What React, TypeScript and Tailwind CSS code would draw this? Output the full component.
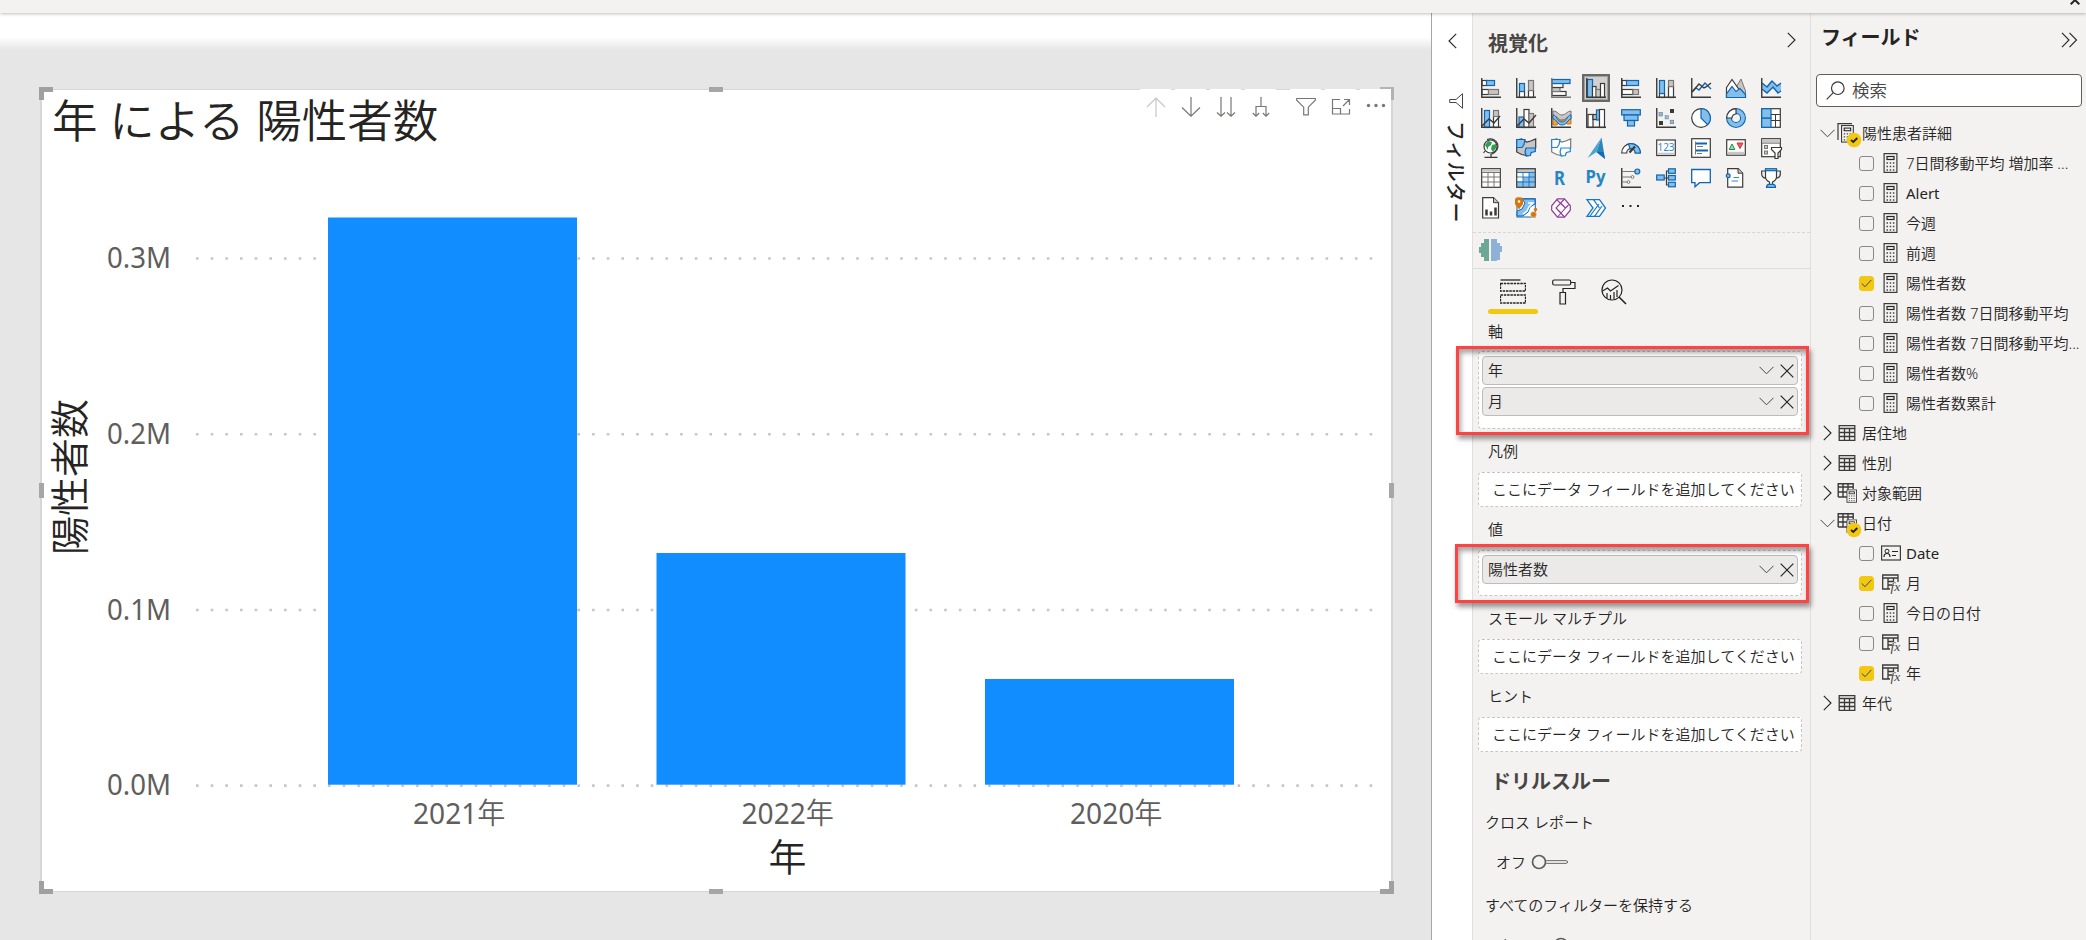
import React from 'react';
import clsx from 'clsx';

const DARK = '#3b3a38';
const MID = '#797775';
const GRAY = '#c8c6c4';
const BLUE = '#0f66b0';
const SKY = '#83beec';

const Axis = ({ c = DARK }: { c?: string }) => <path d="M.75 0V19.25H20" stroke={c} strokeWidth="1.4" fill="none" />;

const Box = ({ x, y, w, h, f = '#fff', s = DARK }: { x: number; y: number; w: number; h: number; f?: string; s?: string }) => (
  <rect x={x} y={y} width={w} height={h} fill={f} stroke={s} strokeWidth="1.2" />
);

// 20x20 drawings of the visual gallery, row by row
const visuals: React.ReactNode[] = [
  <><Box x={1} y={2.5} w={5} h={5} /><Box x={5.5} y={2.5} w={8} h={5} f={SKY} s={BLUE} /><Box x={1} y={11.5} w={6.5} h={5} /><Box x={7.5} y={11.5} w={10} h={5} f={GRAY} s={MID} /><Axis /></>,
  <><Box x={3.5} y={13.5} w={5} h={6} /><Box x={3.5} y={5.5} w={5} h={8} f={SKY} s={BLUE} /><Box x={12.5} y={12.5} w={5} h={7} /><Box x={12.5} y={2.5} w={5} h={10} f={GRAY} s={MID} /><Axis /></>,
  <><Box x={1} y={13.5} w={14} h={4} /><Box x={1} y={9.5} w={8} h={4} f={GRAY} s={MID} /><Box x={1} y={5.5} w={11} h={4} /><Box x={1} y={1.5} w={18} h={4} f={SKY} s={BLUE} /><Axis c={MID} /></>,
  <><Box x={1.5} y={1.5} w={5} h={18} f={SKY} s={BLUE} /><Box x={6.5} y={8.5} w={3.5} h={11} /><Box x={10} y={11.5} w={4.5} h={8} f={GRAY} s={MID} /><Box x={14.5} y={5.5} w={4} h={14} /><Axis /></>,
  <><Box x={1} y={2.5} w={5} h={5} /><Box x={5.5} y={2.5} w={12} h={5} f={SKY} s={BLUE} /><Box x={1} y={11.5} w={11} h={5} /><Box x={12} y={11.5} w={5.5} h={5} f={GRAY} s={MID} /><Axis /></>,
  <><Box x={3.5} y={15.5} w={5} h={4} /><Box x={3.5} y={2.5} w={5} h={13} f={SKY} s={BLUE} /><Box x={12.5} y={8.5} w={5} h={11} /><Box x={12.5} y={2.5} w={5} h={6} f={GRAY} s={MID} /><Axis /></>,
  <><path d="M1 14l4-4 3 2 6-7 6 6" stroke={BLUE} strokeWidth="1.4" fill="none" /><path d="M1 14l7-8 5 4 2-1 5-4" stroke={DARK} strokeWidth="1.4" fill="none" /><Axis /></>,
  <><path d="M9 11l6-10 4.5 12v6.5H9z" fill={GRAY} stroke={MID} /><path d="M.5 9.5L6 1.5l7 10-6 8H.5z" fill="#fff" stroke={DARK} strokeWidth="1.2" /><path d="M.5 19.5V16L6 8.5l4 5 4-3 5.5 6v3z" fill={SKY} stroke={BLUE} strokeWidth="1.2" /></>,
  <><path d="M1 5l4 4 5-6 5 5 5-3v8l-3 2-6-6-5 6-5-5z" fill={SKY} /><path d="M1 5l5 4 5-6 5 5 4-3M1 11l5 4 6-6 5 6 3-2" fill="none" stroke={BLUE} strokeWidth="1.4" /><Axis /></>,

  <><Box x={3.5} y={2.5} w={5} h={17} f={SKY} s={BLUE} /><Box x={12.5} y={8} w={5} h={11.5} /><Box x={12.5} y={2.5} w={5} h={6} f={GRAY} s={MID} /><path d="M1 18l7-7 5 4 6-7" fill="none" stroke={DARK} strokeWidth="1.4" /><Axis /></>,
  <><Box x={3} y={9} w={5.5} h={10.5} f={SKY} s={BLUE} /><Box x={8} y={1.5} w={5} h={18} /><Box x={13} y={5.5} w={4.5} h={14} f={GRAY} s={MID} /><path d="M1 18l7-7 5 4 7-8" fill="none" stroke={DARK} strokeWidth="1.4" /><Axis /></>,
  <><path d="M2 8h4l3 4h3l3-4h5v8h-4l-3-3h-4l-3 4H2z" fill="#f0a13c" stroke="#d9730d" /><path d="M2 3c5 0 5 4 9 4s5-4 9-4v5c-4 0-5 4-9 4S7 8 2 8z" fill={GRAY} stroke={MID} /><path d="M2 7c4 0 4 7 9 7s5-7 9-7v4c-3 0-4 6-9 6s-5-6-9-6z" fill={SKY} stroke={BLUE} /><Axis /></>,
  <><Box x={2} y={6.5} w={5} h={13} /><Box x={7} y={6.5} w={3.5} h={5} f={GRAY} /><Box x={10.5} y={2} w={3} h={10} f={SKY} s={BLUE} /><Box x={13.5} y={1.5} w={5} h={18} /><Axis /></>,
  <><Box x={.7} y={1.7} w={18.6} h={5.3} f={SKY} s={BLUE} /><Box x={3} y={7} w={14} h={5.5} f={SKY} s={BLUE} /><Box x={6.5} y={12.5} w={7} h={5.5} f={SKY} s={BLUE} /></>,
  <><rect x="3" y="4.5" width="3.5" height="3.5" fill={SKY} stroke={MID} strokeWidth=".6" /><rect x="9" y="7.5" width="3.5" height="3.5" fill={SKY} stroke={MID} strokeWidth=".4" /><rect x="14" y="1" width="4" height="4" fill={DARK} /><rect x="3" y="13" width="4" height="4" fill={DARK} /><rect x="14.2" y="12.2" width="3.5" height="3.5" fill={SKY} stroke={MID} strokeWidth=".6" /><Axis /></>,
  <><circle cx="10" cy="10" r="9.3" fill="#fff" stroke={DARK} strokeWidth="1.2" /><path d="M10 .7A9.3 9.3 0 0116.6 16.6L10 10z" fill={SKY} stroke={BLUE} strokeWidth="1.2" /></>,
  <><circle cx="10" cy="10" r="7" fill="none" stroke={BLUE} strokeWidth="6" /><circle cx="10" cy="10" r="7" fill="none" stroke={SKY} strokeWidth="3.8" /><path d="M.7 10A9.3 9.3 0 0110 .7V6a4 4 0 00-4 4z" fill="#fff" stroke={DARK} strokeWidth="1.2" /></>,
  <><Box x={.7} y={.7} w={18.6} h={18.6} /><Box x={.7} y={.7} w={9.3} h={9.5} f={SKY} s={BLUE} /><Box x={.7} y={10.2} w={9.3} h={9.1} f={SKY} s={BLUE} /><path d="M10 6.5h9M10 12.5h9M14.5 6.5V19" stroke={DARK} fill="none" /></>,

  <><path d="M6 1.5C17-2 22 12 10 16.5M10 16v3M3.5 19.3h13M4 13l-1.5 2" stroke={DARK} strokeWidth="1.2" fill="none" /><circle cx="9.5" cy="8.5" r="6.5" fill="#fff" stroke={DARK} strokeWidth="1.2" /><path d="M4 7l3-4 4 1-1 3-3 2v3zM11 7l4-1v4l-3 4-2-3z" fill="#2e9e4f" /></>,
  <><path d="M.7 2l5-1 5 3 4-1 5-2v9l-4 4-5 3.5-5-1L.7 14z" fill={GRAY} stroke={DARK} strokeWidth="1.2" /><path d="M.7 1.5H9l-1 5-2 3H.7zM9 14l1-4h9.3v3.5l-4 1-1 3-4 .5z" fill={SKY} stroke={BLUE} strokeWidth="1.2" /></>,
  <><path d="M.7 2l5-1 5 3 4-1 5-2v9l-4 4-5 3.5-5-1L.7 14z" fill="#fff" stroke={MID} strokeWidth="1.2" /><path d="M.7 1.5H9l-1 5-2 3H.7zM9 14l1-4h9.3v3.5l-4 1-1 3-4 .5z" fill="#fff" stroke="#1b84d3" strokeWidth="1.2" /></>,
  <><path d="M15.5-.5L1.5 20l9-6z" fill="#4aa5cf" /><path d="M15.5-.5L10.5 14l8.5 7z" fill="#2b86b8" /><path d="M10.5 14l8.5 7-1.5-7z" fill="#0f6cbd" /></>,
  <><path d="M.7 15A9.3 9.3 0 0119.3 15h-5a4.3 4.3 0 00-8.6 0z" fill="#fff" stroke={DARK} strokeWidth="1.2" /><path d="M7.5 6A9.3 9.3 0 0119.3 15h-5a4.3 4.3 0 00-5.3-4.2z" fill={SKY} stroke={BLUE} strokeWidth="1.2" /><path d="M8.5 14.5L14 8.5" stroke={DARK} strokeWidth="2.2" /></>,
  <><Box x={.7} y={2} w={18.6} h={15.5} /><path d="M1.5 15.7h17" stroke={GRAY} strokeWidth="2" /><text x="10" y="13" fontSize="10" textAnchor="middle" fill="#2b88d8" className="font-normal">123</text></>,
  <><Box x={.7} y={.7} w={18.6} h={18.6} /><path d="M4.5 3.5v13M6 8.5h6M6 15.5h5" stroke={MID} /><path d="M5 5.5h11M5 12.5h12" stroke={BLUE} strokeWidth="1.8" /></>,
  <><Box x={.7} y={1.7} w={18.6} h={15.5} /><path d="M1.5 15h17" stroke={GRAY} strokeWidth="2.5" /><path d="M3.2 11.5L6 6l2.8 5.5z" fill="#a7d9b0" stroke="#1e8e3e" /><path d="M11 5h6l-3 5.5z" fill="#f15b5b" stroke="#d13438" /></>,
  <><Box x={.7} y={.7} w={18.6} h={18} /><path d="M1 3h18" stroke={GRAY} strokeWidth="3.5" /><path d="M1 5.2h18" stroke={MID} /><rect x="3.5" y="7.5" width="3" height="3" fill={GRAY} stroke={MID} /><rect x="3.5" y="13" width="3" height="3" fill={GRAY} stroke={MID} /><path d="M10.5 9.5h10v2L17 15v5.5h-3V15l-3.5-3.5z" fill="#fff" stroke={DARK} strokeWidth="1.2" /></>,

  <><Box x={.7} y={.7} w={18.6} h={18.6} /><path d="M1.3 2.5h17.4" stroke={GRAY} strokeWidth="2.5" /><path d="M1 4.5h18M1 9h18M1 14h18M7 4.5v15M13 4.5v15" stroke={MID} fill="none" /></>,
  <><rect x="1" y="1" width="18" height="18" fill={SKY} /><path d="M1 2.5h18" stroke={GRAY} strokeWidth="2.5" /><path d="M1 5h6v8H1zM7 5h6v4H7z" fill="#fff" /><path d="M1 4.5h18M1 9h18M1 14h18M7 4.5v15M13 4.5v15" stroke={BLUE} strokeWidth=".8" fill="none" /><Box x={.7} y={.7} w={18.6} h={18.6} f="none" /></>,
  <text x="8.5" y="16.5" fontSize="19" fontWeight="700" textAnchor="middle" fill="#2786c2" textLength="11" lengthAdjust="spacingAndGlyphs">R</text>,
  <text x="9.5" y="14.5" fontSize="18" fontWeight="700" textAnchor="middle" fill="#2786c2" textLength="20" lengthAdjust="spacingAndGlyphs">Py</text>,
  <><Axis /><path d="M1 3.5h13M1 9h9M1 14h5" stroke={MID} strokeWidth="1.2" /><circle cx="16.3" cy="3.5" r="2.5" fill={SKY} stroke={BLUE} strokeWidth="1.2" /><circle cx="11.5" cy="9" r="1.4" fill="#fff" stroke={MID} /><circle cx="7.5" cy="14" r="1.4" fill="#fff" stroke={MID} /></>,
  <><path d="M8 10h5M13 3h-2.5v14H13" stroke={DARK} strokeWidth="1.2" fill="none" /><Box x={.7} y={7} w={7.5} h={5} f={SKY} s={BLUE} /><Box x={12.5} y={.8} w={6.8} h={4.5} f={SKY} s={BLUE} /><Box x={12.5} y={7.5} w={6.8} h={4.5} f={SKY} s={BLUE} /><Box x={12.5} y={14.3} w={6.8} h={4.5} f={SKY} s={BLUE} /></>,
  <path d="M.7 1.5h18.6v13.2H8.5l-4.5 4v-4H.7z" fill="#fff" stroke={BLUE} strokeWidth="1.3" />,
  <><path d="M1.7.7h10.5l4.5 4.5v14h-15z" fill="#fff" stroke={DARK} strokeWidth="1.2" /><path d="M12 .7v4.5h4.7" fill={GRAY} stroke={DARK} /><circle cx="2.2" cy="7.8" r="1.9" fill={SKY} stroke={BLUE} strokeWidth="1.2" /><path d="M7.5 9.5h5.5M5.5 13h6.5" stroke="#2b88d8" strokeWidth="1.2" /></>,
  <><path d="M4.5 3H.7v3c0 3 2 4 4.5 4.500M15.500 3h3.800v3c0 3-2 4-4.500 4.500" stroke={DARK} strokeWidth="1.2" fill="none" /><path d="M4.5 2h11v7c0 3-2 4-4 5v3h-3v-3c-2-1-4-2-4-5z" fill="#fff" stroke={DARK} strokeWidth="1.2" /><Box x={4.5} y={.7} w={11} h={2} f={SKY} s={BLUE} /><path d="M5.5 19.3c0-2 1-3 2.5-3h4c1.5 0 2.5 1 2.5 3z" fill={SKY} stroke={BLUE} strokeWidth="1.2" /></>,

  <><path d="M1.7-.3h10.8l5 5V20H1.7z" fill="#fff" stroke={DARK} strokeWidth="1.2" /><path d="M12.5-.3v5h5" fill={GRAY} stroke={DARK} /><path d="M5.5 17.5v-6M10 17.5v-4M14.5 17.5v-8" stroke={DARK} strokeWidth="2.5" /></>,
  <><rect x="1" y=".7" width="18.3" height="18.3" fill="#fff" stroke={BLUE} /><path d="M6 1h13v5l-5 3-2 5-5 4H1v-5l5-2 3-6z" fill={SKY} stroke={BLUE} /><path d="M12 5h5l-4 4-2 4-4 3" stroke="#fff" strokeWidth="1.5" fill="none" /><path d="M2.5-.7H2a3 3 0 00-3 3v4l4 5 4-5v-4a3 3 0 00-3-3z" fill="#d9730d" /><circle cx="3" cy="3.5" r="1.3" fill="#fff" /><circle cx="17.5" cy="16.5" r="3" fill="#d9730d" stroke="#f3f2f1" strokeWidth=".5" /><circle cx="19.5" cy="11.5" r="1.7" fill="#d9730d" /></>,
  <><path d="M6.5.8h7l5.8 7v4.4l-5.8 7h-7L.7 12.2V7.800z" fill="#fff" stroke="#8f3b97" strokeWidth="1.2" /><path d="M13.500 1L5 10l5 5 4.500-5L5.500 1.500M10 5.500l4.500 4.500M5 10l8.500 9M14.500 10L6.500 19M14.500 10l3-3" fill="none" stroke="#8f3b97" strokeWidth="1.1" /></>,
  <><path d="M1 1.7h12.5l6 8.3-6 8.3H1L7 10z" fill="#fff" stroke="#1477cf" strokeWidth="1.3" /><path d="M7.5 1.7l6 8.3M13 6L4 18M16 8L8.5 18.3" fill="none" stroke="#1477cf" strokeWidth="1.2" /></>,
  <><rect x="1" y="7" width="2" height="2" fill="#252423" /><rect x="8.5" y="7" width="2" height="2" fill="#252423" /><rect x="16" y="7" width="2" height="2" fill="#252423" /></>,
];

function Chevron({ dir }: { dir: 'left' | 'right' | 'down' }) {
  if (dir === 'down') {
    return <svg width="15" height="9" viewBox="0 0 15 9" className="shrink-0"><path d="M.5.8l7 7 7-7" fill="none" stroke="#484644" /></svg>;
  }
  return (
    <svg width="9" height="16" viewBox="0 0 9 16" className="shrink-0">
      <path d={dir === 'left' ? 'M8.2.8L1 8l7.2 7.2' : 'M.8.8L8 8 .8 15.2'} fill="none" stroke="#252423" strokeWidth="1.1" />
    </svg>
  );
}

/* ---------- chart ---------- */

const bars = [
  { year: '2021', x: 328, y: 217.5 },
  { year: '2022', x: 656.5, y: 553 },
  { year: '2020', x: 985, y: 679 },
];

const ticks = [
  { label: '0.3M', y: 258.5 },
  { label: '0.2M', y: 434.2 },
  { label: '0.1M', y: 610 },
  { label: '0.0M', y: 785.6 },
];

function Chart() {
  return (
    <svg width="1349" height="741" viewBox="42 150 1349 741" className="block">
      {ticks.map((t) => (
        <g key={t.label}>
          <line x1="196" x2="1376" y1={t.y} y2={t.y} stroke="#c8c6c4" strokeWidth="2.6" strokeDasharray="2.6 12.07" />
          <text x="107" y={t.y + 9.5} fontSize="29" fill="#605e5c" textLength="64" lengthAdjust="spacingAndGlyphs" className="font-normal">{t.label}</text>
        </g>
      ))}
      {bars.map((b) => (
        <g key={b.year}>
          <rect x={b.x} y={b.y} width="249" height={784.7 - b.y} fill="#118dff" />
          <text x={b.x + 85} y="824" fontSize="29" fill="#605e5c" textLength="92.5" lengthAdjust="spacingAndGlyphs">
            <tspan className="font-normal">{b.year}</tspan>年
          </text>
        </g>
      ))}
      <text x="787.5" y="871" fontSize="38" fill="#252423" textAnchor="middle">年</text>
      <text transform="translate(84 477) rotate(-90)" fontSize="39" fill="#252423" textAnchor="middle">陽性者数</text>
    </svg>
  );
}

const toolIcons = [
  <path d="M10 20V1M1 10l9-9 9 9" stroke="#c8c6c4" />,
  <path d="M10 0v19M1 10.5l9 8.7 9-8.7" />,
  <path d="M5 0v19M15 0v19M1 15.5l4 3.7 4-3.7M11 15.5l4 3.7 4-3.7" />,
  <path d="M10 0v9M5 19V9.5h10V19M1.8 16L5 19.2 8.200 16M11.8 16l3.2 3.2 3.2-3.2" />,
];

const toolIcons2 = [
  <path d="M.7 1.5h18.6v1.7l-7 7v7.6H7.7v-7.6l-7-7z" />,
  <path d="M9 2.5H1.500V17h17v-5M9.500 17v-5.500h-8M12 9l6-6M13 2.500h5.500V8" />,
  <><circle cx="2.5" cy="8.5" r="1.7" fill="#797775" stroke="none" /><circle cx="10" cy="8.5" r="1.7" fill="#797775" stroke="none" /><circle cx="17.5" cy="8.5" r="1.7" fill="#797775" stroke="none" /></>,
];

function ToolButton({ children }: { children: React.ReactNode }) {
  return (
    <div className="flex h-8 w-[31px] justify-center bg-white pt-2">
      <svg width="20" height="20" viewBox="0 0 20 20" fill="none" stroke="#797775" strokeWidth="1.2">{children}</svg>
    </div>
  );
}

function ReportCanvas() {
  return (
    <main className="flex w-[1432px] shrink-0 flex-col border-r border-[#a6a6a6] bg-[#e6e6e6]">
      <div className="h-[37px] shrink-0 bg-linear-to-b from-white from-65% to-[#e6e6e6]" />
      <div className="relative mt-[39px] ml-10 h-[803px] w-[1353px] shrink-0 border-x-2 border-y border-[#d6d6d6] bg-white">
        <h1 className="h-[60px] pl-2.5 text-[45.5px] leading-[60px] font-[350] whitespace-pre">年 による 陽性者数</h1>
        <Chart />
        <div className="absolute -top-px left-[1098px] flex">
          <div className="flex gap-1">{toolIcons.map((icon, i) => <ToolButton key={i}>{icon}</ToolButton>)}</div>
          <div className="ml-3.5 flex gap-1">{toolIcons2.map((icon, i) => <ToolButton key={i}>{icon}</ToolButton>)}</div>
        </div>
        {/* resize handles */}
        <div className="absolute -top-[3px] -left-[3px] h-[13px] w-3.5 border-t-[5px] border-l-[5px] border-[#a0a0a0]" />
        <div className="absolute -top-[3px] -right-[3px] h-[13px] w-3.5 border-t-2 border-r-[3px] border-[#b3b3b3]" />
        <div className="absolute -bottom-[3px] -left-[3px] h-[13px] w-3.5 border-b-[5px] border-l-[5px] border-[#a0a0a0]" />
        <div className="absolute -right-[3px] -bottom-[3px] h-[13px] w-3.5 border-r-[5px] border-b-[5px] border-[#a0a0a0]" />
        <div className="absolute -top-[3px] left-[667px] h-[5px] w-3.5 bg-[#a6a6a6]" />
        <div className="absolute -bottom-[3px] left-[667px] h-[5px] w-3.5 bg-[#a6a6a6]" />
        <div className="absolute top-[393px] -left-[3px] h-[15px] w-[5px] bg-[#a6a6a6]" />
        <div className="absolute top-[393px] -right-[3px] h-[15px] w-[5px] bg-[#a6a6a6]" />
      </div>
    </main>
  );
}

/* ---------- filter strip ---------- */

function FilterStrip() {
  return (
    <aside className="flex w-[41px] shrink-0 flex-col items-center border-r border-[#e1dfdd] bg-white pt-5">
      <Chevron dir="left" />
      <svg width="15" height="16" viewBox="0 0 15 16" className="mt-[44px] ml-2">
        <path d="M13.5.7v14.6L7 9.5H.7v-3H7z" fill="none" stroke="#484644" />
      </svg>
      <div className="mt-3 ml-1.5 h-[108px] text-[20px] leading-6 font-medium tracking-[0.5px] whitespace-nowrap [text-orientation:sideways] [writing-mode:vertical-rl]">フィルター</div>
    </aside>
  );
}

/* ---------- visualizations ---------- */

function Pill({ children }: { children: React.ReactNode }) {
  return (
    <div className="flex h-[29px] shrink-0 items-center rounded-sm border border-[#bebbb8] bg-[#ebeae9] pr-[3px] pl-[5px]">
      <span className="flex-1 leading-none">{children}</span>
      <Chevron dir="down" />
      <svg width="14" height="14" viewBox="0 0 14 14" className="ml-[6px]"><path d="M.7.7l12.6 12.600M13.300.7L.7 13.300" stroke="#252423" strokeWidth="1.2" /></svg>
    </div>
  );
}

function EmptyWell() {
  return (
    <div className="mr-2 ml-[5px] flex h-[35px] shrink-0 items-center rounded-sm border border-dashed border-[#c8c6c4] bg-white pb-px pl-[13px] leading-none whitespace-nowrap">
      ここにデータ フィールドを追加してください
    </div>
  );
}

function FilledWell({ items, className, frame }: { items: string[]; className: string; frame: string }) {
  return (
    <div className={clsx('relative mr-2 ml-[5px] flex shrink-0 flex-col gap-0.5 rounded-sm border border-dashed border-[#c8c6c4] bg-white px-[3px] pt-1', className)}>
      {items.map((item) => <Pill key={item}>{item}</Pill>)}
      <div className={clsx('absolute z-10 border-[3px] border-[#ff4343] shadow-[2px_4px_5px_rgba(0,0,0,0.4),inset_2px_4px_5px_rgba(0,0,0,0.35)]', frame)} />
    </div>
  );
}

function Toggle() {
  return (
    <svg width="38" height="16" viewBox="0 0 38 16">
      <rect x="14" y="6.7" width="22.5" height="2.6" rx="1.3" fill="#fff" stroke="#605e5c" />
      <circle cx="8" cy="8" r="6.5" fill="#f3f2f1" stroke="#605e5c" strokeWidth="1.7" />
    </svg>
  );
}

function Visualizations() {
  return (
    <section className="flex w-[338px] shrink-0 flex-col border-r border-[#e1dfdd]">
      <div className="flex h-[60px] shrink-0 items-center justify-between pr-3.5 pl-[15px]">
        <h2 className="mt-0.5 text-[20px] font-bold text-[#484644]">視覚化</h2>
        <div className="-mt-1.5"><Chevron dir="right" /></div>
      </div>
      <div className="grid h-40 shrink-0 grid-cols-[repeat(9,35px)] content-start border-b border-dashed border-[#d8d6d4]">
        {visuals.map((v, i) => (
          <div key={i} className="flex h-[30px] w-[35px] items-center justify-center">
            <div className={clsx('flex size-7 items-center justify-center', i === 3 && 'border-2 border-[#6a6866] bg-[#d2d0ce] inset-ring inset-ring-[#a19f9d]')}>
              <svg width="20" height="20" viewBox="0 0 20 20" className="shrink-0 overflow-visible">{v}</svg>
            </div>
          </div>
        ))}
      </div>
      <div className="h-9 shrink-0 border-b border-[#dedcda] pt-[5px] pl-1.5">
        <svg width="23" height="24" viewBox="0 0 23 24">
          <path d="M5 1h5v22H5v-4H2v-4H0V9h2V5h3z" fill="#6fa797" />
          <path d="M12 1h6v4h3v3h2v6h-2v8h-3v1h-6z" fill="#8eb2d6" />
        </svg>
      </div>

      <div className="flex h-[46px] shrink-0 pt-2.5 pl-[15px]">
        <div className="flex w-[50px] flex-col items-center">
          <svg width="26" height="26" viewBox="0 0 26 26" fill="none" stroke="#252423" strokeWidth="1.3">
            <path d="M.5 1h20" />
            <path d="M.5 4.5h25V12H.5zM.5 16h25v8H.5z" strokeDasharray="2.5 .8" />
          </svg>
          <div className="mt-1 h-[5px] w-[50px] rounded-full bg-[#f2c811]" />
        </div>
        <svg width="25" height="26" viewBox="0 0 25 26" fill="none" stroke="#252423" strokeWidth="1.2" className="ml-3.5">
          <rect x=".7" y="1" width="18" height="5" rx="1.5" />
          <path d="M19 3.5h4v6H11V13M8 13.5h5.500V25H8z" />
        </svg>
        <svg width="26" height="26" viewBox="0 0 26 26" fill="none" stroke="#252423" strokeWidth="1.2" className="ml-6">
          <circle cx="11" cy="11" r="10" />
          <path d="M18 18l7 7" strokeWidth="1.6" />
          <path d="M1.5 12l5-3 3 3 8-5.500M6 14v5M9.500 16v4.500M13 13v7M16 11v7" />
        </svg>
      </div>

      <div className="h-9 shrink-0 pl-[15px] leading-8">軸</div>
      <FilledWell items={['年', '月']} className="h-[78px]" frame="-top-1.5 -left-[23px] h-[89px] w-[353px]" />
      <div className="h-[43px] shrink-0 pl-[15px] leading-[45px]">凡例</div>
      <EmptyWell />
      <div className="h-[43px] shrink-0 pl-[15px] leading-[45px]">値</div>
      <FilledWell items={['陽性者数']} className="h-[46px]" frame="-top-[7px] -left-6 h-[59px] w-[354px]" />
      <div className="h-[43px] shrink-0 pl-[15px] leading-[45px]">スモール マルチプル</div>
      <EmptyWell />
      <div className="h-[43px] shrink-0 pl-[15px] leading-[45px]">ヒント</div>
      <EmptyWell />
      <h2 className="mt-3.5 h-8 shrink-0 pl-[18px] text-[20px] leading-8 font-bold text-[#484644]">ドリルスルー</h2>
      <div className="mt-3 h-6 shrink-0 pl-3 leading-6">クロス レポート</div>
      <div className="mt-4 flex h-6 shrink-0 items-center pl-[23px]">オフ<div className="ml-[5px]"><Toggle /></div></div>
      <div className="mt-[19px] h-6 shrink-0 pl-3 leading-6">すべてのフィルターを保持する</div>
      <div className="mt-4 flex h-6 shrink-0 items-center pl-[23px]">オン<div className="ml-[5px] -scale-x-100"><Toggle /></div></div>
    </section>
  );
}

/* ---------- fields ---------- */

type Kind = 'calc' | 'card' | 'fx' | 'table' | 'calcGroup' | 'tableCalc';

const CalcShape = () => (
  <>
    <rect x=".6" y=".6" width="12.8" height="18.8" fill="#f3f2f1" stroke="#3b3a39" strokeWidth="1.2" />
    <rect x="3.5" y="3.5" width="7" height="3" fill="none" stroke="#252423" strokeWidth="1.2" />
    <path d="M3 10h8.5M3 13.5h8.500M3 17h8.500" stroke="#484644" strokeWidth="1.5" strokeDasharray="1.5 1.7" />
  </>
);

const GridShape = () => (
  <path d="M.7.7h15.6v14.6H.7zM.7 3.5h15.600M.7 7.500h15.600M.7 11.500h15.600M6 3.500v12M11 3.500v12" fill="none" stroke="#3b3a39" strokeWidth="1.3" />
);

function FieldIcon({ kind, badge }: { kind: Kind; badge?: boolean }) {
  return (
    <svg width="20" height="20" viewBox="0 0 20 20" className="shrink-0 overflow-visible">
      {kind === 'calc' && <g transform="translate(2.5 0)"><CalcShape /></g>}
      {kind === 'card' && <><rect x=".6" y="3" width="18.8" height="14" fill="none" stroke="#3b3a39" strokeWidth="1.2" /><path d="M3 14c0-3 1.5-3.5 3-3.500S9 11 9 14M11 8.500h6M11 12.500h4" fill="none" stroke="#252423" strokeWidth="1.2" /><circle cx="6" cy="8.2" r="2" fill="none" stroke="#252423" /></>}
      {kind === 'fx' && <><path d="M17 9V2H1.7v14H9M1.700 5H17M7 5v11M7 8.500h5M7 12h4M12.500 5v4" fill="none" stroke="#3b3a39" strokeWidth="1.3" /><text x="9.5" y="17.5" className="font-['Liberation_Serif',serif] italic" fontSize="13.5" fill="#484644">fx</text></>}
      {kind === 'table' && <g transform="translate(1.5 2)"><GridShape /></g>}
      {kind === 'calcGroup' && <><path d="M1 17V.7h14" fill="none" stroke="#3b3a39" strokeWidth="1.2" /><g transform="translate(4 2) scale(.92 .88)"><CalcShape /></g></>}
      {kind === 'tableCalc' && <><g transform="translate(.5 0)"><path d="M.7 14V.7h15V6M.7 4h15M.7 9h9M.7 14h9M5.500 1v13M10.500 1v6" fill="none" stroke="#3b3a39" strokeWidth="1.4" /></g><g transform="translate(9.5 6.5) scale(.75 .66)"><CalcShape /></g></>}
      {badge && <><circle cx="17" cy="17" r="7.3" fill="#f2c811" /><path d="M14 17l2.300 2 4-4" fill="none" stroke="#252423" strokeWidth="2" /></>}
    </svg>
  );
}

interface TreeRow {
  name: string;
  kind: Kind;
  group?: 'open' | 'closed';
  checked?: boolean;
}

const rows: TreeRow[] = [
  { name: '陽性患者詳細', kind: 'calcGroup', group: 'open' },
  { name: '7日間移動平均 増加率 ...', kind: 'calc' },
  { name: 'Alert', kind: 'calc' },
  { name: '今週', kind: 'calc' },
  { name: '前週', kind: 'calc' },
  { name: '陽性者数', kind: 'calc', checked: true },
  { name: '陽性者数 7日間移動平均', kind: 'calc' },
  { name: '陽性者数 7日間移動平均...', kind: 'calc' },
  { name: '陽性者数%', kind: 'calc' },
  { name: '陽性者数累計', kind: 'calc' },
  { name: '居住地', kind: 'table', group: 'closed' },
  { name: '性別', kind: 'table', group: 'closed' },
  { name: '対象範囲', kind: 'tableCalc', group: 'closed' },
  { name: '日付', kind: 'tableCalc', group: 'open' },
  { name: 'Date', kind: 'card' },
  { name: '月', kind: 'fx', checked: true },
  { name: '今日の日付', kind: 'calc' },
  { name: '日', kind: 'fx' },
  { name: '年', kind: 'fx', checked: true },
  { name: '年代', kind: 'table', group: 'closed' },
];

function Row({ row }: { row: TreeRow }) {
  if (row.group) {
    return (
      <li className="flex h-[30px] items-center pl-[9px]">
        <div className="flex w-[15px] justify-center"><Chevron dir={row.group === 'open' ? 'down' : 'right'} /></div>
        <div className="ml-0.5"><FieldIcon kind={row.kind} badge={row.group === 'open'} /></div>
        <span className="ml-[5px]">{row.name}</span>
      </li>
    );
  }
  return (
    <li className="flex h-[30px] items-center pl-12">
      <div className={clsx('flex size-[15px] items-center justify-center rounded-[3px] border', row.checked ? 'border-[#f2c811] bg-[#f2c811]' : 'border-[#8a8886]')}>
        {row.checked && <svg width="11" height="9" viewBox="0 0 11 9" className="shrink-0"><path d="M.8 4.5L4 7.7 10.3.9" fill="none" stroke="#484644" /></svg>}
      </div>
      <div className="ml-[7px]"><FieldIcon kind={row.kind} /></div>
      <span className={clsx('ml-[5px] whitespace-nowrap', /^[A-Z]/.test(row.name) && 'font-normal')}>{row.name}</span>
    </li>
  );
}

function Fields() {
  return (
    <section className="flex flex-1 flex-col">
      <div className="flex h-[61px] shrink-0 items-center justify-between pr-2 pl-2.5">
        <h2 className="-mt-3 text-[20px] font-bold">フィールド</h2>
        <svg width="17" height="16" viewBox="0 0 17 16" className="-mt-2" fill="none" stroke="#252423" strokeWidth="1.1"><path d="M1 .8L8 8l-7 7.2M8.500.8l7 7.200-7 7.200" /></svg>
      </div>
      <div className="mr-1 ml-[5px] flex h-[33px] shrink-0 items-center rounded-sm border border-[#605e5c] bg-white pl-[9px] text-[17.5px] text-[#484644]">
        <svg width="19" height="19" viewBox="0 0 19 19" fill="none" stroke="#3b3a39" strokeWidth="1.2"><circle cx="11.8" cy="7.2" r="6.3" /><path d="M7.3 11.7L.7 18.3" /></svg>
        <span className="ml-[7px] leading-none">検索</span>
      </div>
      <ul className="mt-[11px]">
        {rows.map((row) => <Row key={row.name} row={row} />)}
      </ul>
    </section>
  );
}

export default function App() {
  return (
    <div className="flex h-[940px] w-[2086px] flex-col overflow-hidden bg-[#f3f2f1] font-['Noto_Sans','Noto_Sans_CJK_JP',sans-serif] text-[15px] font-[350] text-[#252423]">
      <header className="relative z-20 flex h-[13px] shrink-0 justify-end bg-[#f3f2f1] pr-1.5 shadow-[0_1px_3px_rgba(0,0,0,0.25)]">
        <svg width="10" height="10" viewBox="0 0 10 10" className="-mt-[5px]"><path d="M.7.7l8.6 8.600M9.300.7L.7 9.300" stroke="#252423" strokeWidth="2" /></svg>
      </header>
      <div className="flex min-h-0 flex-1">
        <ReportCanvas />
        <FilterStrip />
        <Visualizations />
        <Fields />
      </div>
    </div>
  );
}
